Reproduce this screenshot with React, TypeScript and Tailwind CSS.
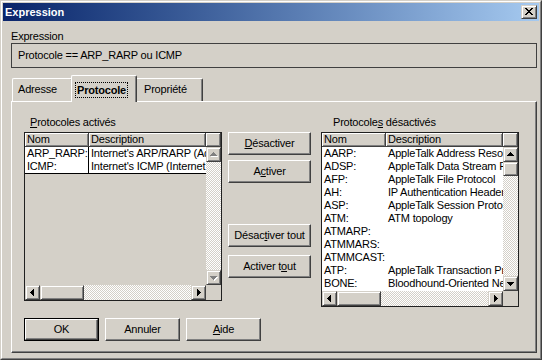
import React from 'react';

const RAISED =
  'border border-t-white border-l-white border-r-[#404040] border-b-[#404040] shadow-[inset_-1px_-1px_#808080] bg-[#d4d0c8]';
const SB_BTN =
  'border border-t-[#d4d0c8] border-l-[#d4d0c8] border-r-[#404040] border-b-[#404040] shadow-[inset_1px_1px_#fff,inset_-1px_-1px_#808080] bg-[#d4d0c8] flex items-center justify-center';
const TRACK = 'bg-[image:repeating-conic-gradient(#d4d0c8_0_25%,#ffffff_0_50%)] bg-[length:2px_2px]';
const HEAD =
  'h-[14px] border-r border-b border-[#404040] shadow-[inset_1px_1px_#fff,inset_-1px_-1px_#808080] bg-[#d4d0c8] pl-[2px] leading-[13px] whitespace-nowrap overflow-hidden';

type Dir = 'up' | 'down' | 'left' | 'right';

// glyphs are drawn pixel by pixel, like the classic theme
const ARROWS: Record<Dir, { w: number; h: number; d: string }> = {
  up: { w: 7, h: 5, d: 'M3 0h1v1H3zM2 1h3v1H2zM1 2h5v1H1zM0 3h7v1H0z' },
  down: { w: 7, h: 5, d: 'M0 1h7v1H0zM1 2h5v1H1zM2 3h3v1H2zM3 4h1v1H3z' },
  left: { w: 5, h: 7, d: 'M0 3h1v1H0zM1 2h1v3H1zM2 1h1v5H2zM3 0h1v7H3z' },
  right: { w: 5, h: 7, d: 'M1 0h1v7H1zM2 1h1v5H2zM3 2h1v3H3zM4 3h1v1H4z' },
};

function Arrow({ dir, disabled }: { dir: Dir; disabled?: boolean }) {
  const a = ARROWS[dir];
  return (
    <svg width={a.w} height={a.h} viewBox={`0 0 ${a.w} ${a.h}`} shapeRendering="crispEdges" className="overflow-visible">
      {disabled && <path d={a.d} fill="#ffffff" transform="translate(1,1)" />}
      <path d={a.d} fill={disabled ? '#808080' : '#000000'} />
    </svg>
  );
}

function U({ children }: { children: React.ReactNode }) {
  return <span className="underline underline-offset-[1px]">{children}</span>;
}

function PushButton({ children, width, isDefault }: { children: React.ReactNode; width: string; isDefault?: boolean }) {
  if (isDefault) {
    return (
      <div className={`${width} h-[23px] border border-black`}>
        <div className={`h-full ${RAISED} flex items-center justify-center`}>{children}</div>
      </div>
    );
  }
  return <div className={`${width} h-[23px] ${RAISED} flex items-center justify-center`}>{children}</div>;
}

function VScroll({ thumb, disabled }: { thumb?: boolean; disabled?: boolean }) {
  return (
    <div className="w-[15px] flex flex-col">
      <div className={`h-[15px] ${SB_BTN}`}>
        <Arrow dir="up" disabled={disabled} />
      </div>
      {thumb && <div className={`h-[14px] ${SB_BTN}`} />}
      <div className={`flex-1 ${TRACK}`} />
      <div className={`h-[15px] ${SB_BTN}`}>
        <Arrow dir="down" disabled={disabled} />
      </div>
    </div>
  );
}

function HScroll() {
  return (
    <div className="w-[181px] h-[15px] flex">
      <div className={`w-[15px] ${SB_BTN}`}>
        <Arrow dir="left" />
      </div>
      <div className={`w-[44px] ${SB_BTN}`} />
      <div className={`flex-1 ${TRACK}`} />
      <div className={`w-[15px] ${SB_BTN}`}>
        <Arrow dir="right" />
      </div>
    </div>
  );
}

function ListHeader() {
  return (
    <div className="flex h-[14px]">
      <div className={`w-[64px] ${HEAD}`}>Nom</div>
      <div className={`w-[117px] ${HEAD}`}>Description</div>
      <div className={`flex-1 ${HEAD}`} />
    </div>
  );
}

const ACTIVE = [
  ['ARP_RARP:', "Internet's ARP/RARP (Address Resolution Protocol)"],
  ['ICMP:', "Internet's ICMP (Internet Control Message Protocol)"],
];

const INACTIVE = [
  ['AARP:', 'AppleTalk Address Resolution Protocol'],
  ['ADSP:', 'AppleTalk Data Stream Protocol'],
  ['AFP:', 'AppleTalk File Protocol'],
  ['AH:', 'IP Authentication Header'],
  ['ASP:', 'AppleTalk Session Protocol'],
  ['ATM:', 'ATM topology'],
  ['ATMARP:', ''],
  ['ATMMARS:', ''],
  ['ATMMCAST:', ''],
  ['ATP:', 'AppleTalk Transaction Protocol'],
  ['BONE:', 'Bloodhound-Oriented Network Entity'],
];

function ActiveList() {
  return (
    <div className="w-[198px] h-[169px] border border-[#202020] bg-[#d4d0c8] flex flex-col">
      <ListHeader />
      <div className="flex h-[138px]">
        <div className="w-[181px]">
          <div className="bg-white border-b border-black">
            {ACTIVE.map(([nom, desc]) => (
              <div key={nom} className="flex h-[13px] leading-[13px]">
                <div className="w-[64px] border-r border-black pl-[2px] whitespace-nowrap overflow-hidden">{nom}</div>
                <div className="w-[117px] pl-[2px] whitespace-nowrap overflow-hidden">{desc}</div>
              </div>
            ))}
          </div>
        </div>
        <VScroll disabled />
      </div>
      <div className="flex">
        <HScroll />
        <div className="flex-1" />
      </div>
    </div>
  );
}

function InactiveList() {
  return (
    <div className="w-[198px] h-[175px] border border-[#202020] bg-[#d4d0c8] flex flex-col">
      <ListHeader />
      <div className="flex h-[144px]">
        <div className="w-[181px] bg-white">
          {INACTIVE.map(([nom, desc]) => (
            <div key={nom} className="flex h-[13px] leading-[13px]">
              <div className="w-[64px] pl-[2px] whitespace-nowrap overflow-hidden">{nom}</div>
              <div className="w-[117px] pl-[2px] whitespace-nowrap overflow-hidden">{desc}</div>
            </div>
          ))}
        </div>
        <VScroll thumb />
      </div>
      <div className="flex">
        <HScroll />
        <div className="flex-1" />
      </div>
    </div>
  );
}

export default function App() {
  return (
    <div className="w-[542px] h-[360px] bg-[#d4d0c8] font-['Liberation_Sans',Arial,sans-serif] text-[11px] leading-[13px] tracking-[-0.2px] text-black select-none border border-t-[#d4d0c8] border-l-[#d4d0c8] border-r-[#404040] border-b-[#404040]">
      <div className="h-full border border-t-white border-l-white border-r-[#808080] border-b-[#808080] p-px flex flex-col">
        {/* Caption */}
        <div className="h-[18px] bg-gradient-to-r from-[#0a246a] to-[#a6caf0] flex items-center justify-between pl-[2px] pr-[2px]">
          <span className="text-white font-bold tracking-normal">Expression</span>
          <div className={`w-[16px] h-[14px] ${SB_BTN}`}>
            <svg width="8" height="8" viewBox="0 0 8 8" shapeRendering="crispEdges">
              <path
                fill="#000"
                d="M0 0h2v1H0zM6 0h2v1H6zM1 1h2v1H1zM5 1h2v1H5zM2 2h4v1H2zM3 3h2v1H3zM2 4h4v1H2zM1 5h2v1H1zM5 5h2v1H5zM0 6h2v1H0zM6 6h2v1H6z"
              />
            </svg>
          </div>
        </div>

        <div className="pl-[8px] pr-[2px] flex flex-col">
          <div className="mt-[9px] h-[13px]">Expression</div>
          <div className="h-[25px] border border-[#404040] pl-[6px] flex items-center">Protocole == ARP_RARP ou ICMP</div>

          {/* Tabs */}
          <div className="mt-[7px] h-[26px] flex items-end pl-px">
            <div className="w-[61px] h-[23px] border-l border-t border-white border-r border-r-[#404040] shadow-[inset_-1px_0_#808080] rounded-tl-[2px] rounded-tr-[2px] pl-[5px] pt-[4px]">
              Adresse
            </div>
            <div className="relative z-10 w-[66px] h-[27px] -mx-[2px] -mb-px bg-[#d4d0c8] border-l border-t border-white border-r border-r-[#404040] shadow-[inset_-1px_0_#808080] rounded-tl-[2px] rounded-tr-[2px] pl-[3px] pt-[6px]">
              <span className="inline-block h-[16px] border border-dotted border-black px-px leading-[14px] font-bold">Protocole</span>
            </div>
            <div className="w-[68px] h-[23px] border-l border-t border-white border-r border-r-[#404040] shadow-[inset_-1px_0_#808080] rounded-tl-[2px] rounded-tr-[2px] pl-[8px] pt-[4px]">
              Propriété
            </div>
          </div>

          {/* Tab page */}
          <div className="h-[252px] border border-t-white border-l-white border-r-[#404040] border-b-[#404040] shadow-[inset_-1px_-1px_#808080] pl-[12px]">
            <div className="flex items-start">
              <div className="w-[198px]">
                <div className="mt-[14px] mb-[3px] h-[13px] pl-[6px]">
                  <U>P</U>rotocoles activés
                </div>
                <ActiveList />
              </div>

              <div className="ml-[6px] w-[83px] pt-[30px] flex flex-col">
                <PushButton width="w-[83px]">
                  <U>D</U>ésactiver
                </PushButton>
                <div className="mt-[5px]">
                  <PushButton width="w-[83px]">
                    A<U>c</U>tiver
                  </PushButton>
                </div>
                <div className="mt-[41px]">
                  <PushButton width="w-[83px]">
                    Désac<U>t</U>iver tout
                  </PushButton>
                </div>
                <div className="mt-[8px]">
                  <PushButton width="w-[83px]">
                    Activer t<U>o</U>ut
                  </PushButton>
                </div>
              </div>

              <div className="ml-[10px] w-[198px]">
                <div className="mt-[14px] mb-[3px] h-[13px] pl-[12px]">
                  Protocole<U>s</U> désactivés
                </div>
                <InactiveList />
              </div>
            </div>

            <div className="mt-[11px] flex gap-[6px]">
              <PushButton width="w-[75px]" isDefault>
                OK
              </PushButton>
              <PushButton width="w-[75px]">Annuler</PushButton>
              <PushButton width="w-[75px]">
                <U>A</U>ide
              </PushButton>
            </div>
          </div>
        </div>
      </div>
    </div>
  );
}
